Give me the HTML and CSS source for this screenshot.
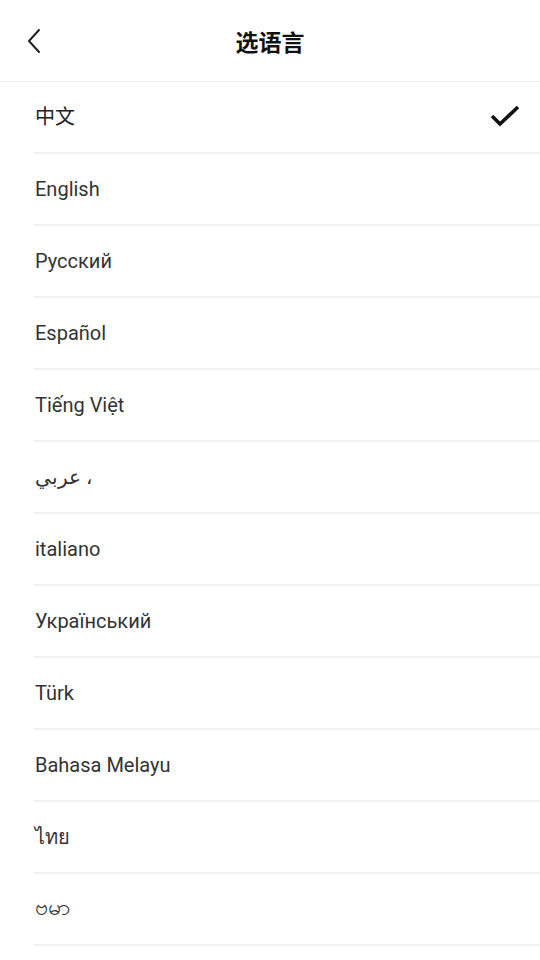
FILE: index.html
```html
<!DOCTYPE html>
<html lang="zh">
<head>
    <meta charset="UTF-8">
    <meta name="viewport" content="width=device-width, initial-scale=1.0">
    <title>选语言</title>
    <link rel="stylesheet" href="styles.css">
</head>
<body>
    <div class="header">
        <div class="back">
            <svg width="16" height="26" viewBox="0 0 16 26">
                <path d="M13 2 L3 13 L13 24" fill="none" stroke="#222" stroke-width="2" stroke-linecap="round" stroke-linejoin="round"/>
            </svg>
        </div>
        <div class="title">选语言</div>
        <div class="spacer"></div>
    </div>

    <ul class="lang-list">
        <li class="lang-item active">
            <span class="cjk">中文</span>
            <svg class="check" width="30" height="24" viewBox="0 0 30 24">
                <path d="M2 12 L10 20 L28 3" fill="none" stroke="#111" stroke-width="3.6"/>
            </svg>
        </li>
        <li class="lang-item">English</li>
        <li class="lang-item">Русский</li>
        <li class="lang-item">Español</li>
        <li class="lang-item">Tiếng Việt</li>
        <li class="lang-item"><span dir="rtl">، عربي</span></li>
        <li class="lang-item">italiano</li>
        <li class="lang-item">Український</li>
        <li class="lang-item">Türk</li>
        <li class="lang-item">Bahasa Melayu</li>
        <li class="lang-item">ไทย</li>
        <li class="lang-item"><span class="mm">ဗမာ</span></li>
    </ul>
</body>
</html>
```

FILE: styles.css
```css
* {
    margin: 0;
    padding: 0;
    box-sizing: border-box;
}

body {
    background: #fff;
    font-family: Roboto, "Noto Sans", "Noto Sans CJK SC", sans-serif;
    color: #333;
}

.header {
    height: 82px;
    display: flex;
    align-items: center;
    padding: 0 26px;
    border-bottom: 1px solid #ededed;
}

.back {
    width: 40px;
    display: flex;
    align-items: center;
    padding-top: 1px;
}

.spacer {
    width: 40px;
}

.title {
    flex: 1;
    text-align: center;
    font-family: "Noto Sans CJK SC", sans-serif;
    font-weight: bold;
    font-size: 23px;
    color: #111;
}

.lang-list {
    list-style: none;
    padding-left: 34px;
}

.lang-item {
    height: 72px;
    display: flex;
    align-items: center;
    justify-content: space-between;
    padding: 0 20px 0 1px;
    border-bottom: 2px solid #f2f2f2;
    font-size: 20px;
    color: #333;
}

.cjk {
    font-family: "Noto Sans CJK SC", sans-serif;
    font-size: 20px;
    color: #222;
    margin-top: -4px;
}

.mm {
    font-size: 23px;
}

.check {
    margin-bottom: 2px;
}
```
